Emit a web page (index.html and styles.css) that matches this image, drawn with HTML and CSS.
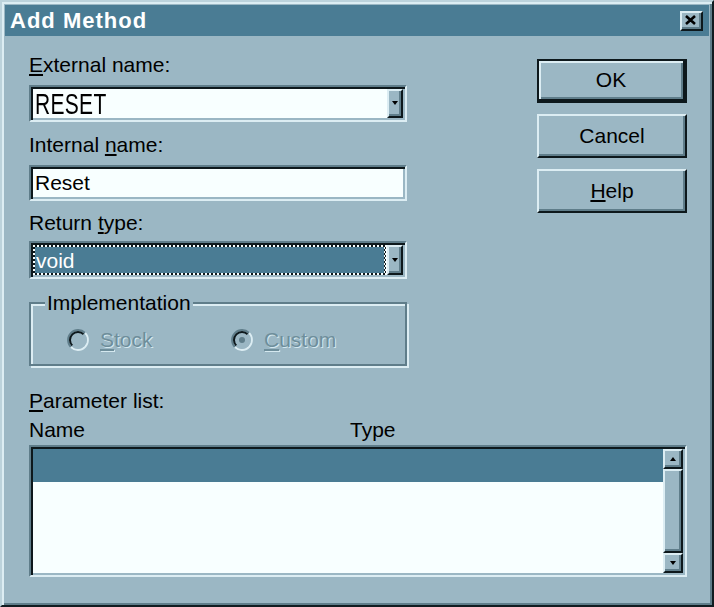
FILE: index.html
```html
<!DOCTYPE html>
<html>
<head>
<meta charset="utf-8">
<link rel="stylesheet" href="styles.css">
</head>
<body>
<div class="window">
  <div class="titlebar">
    <span class="title">Add Method</span>
    <span class="close"><svg width="11" height="10" viewBox="0 0 11 10"><path d="M1 1 L10 9 M10 1 L1 9" stroke="#000" stroke-width="2.6" fill="none"/></svg></span>
  </div>
  <div class="body">
    <div class="main">
      <div class="leftcol">
        <div class="label"><u>E</u>xternal name:</div>
        <div class="field combo">
          <div class="text"><span class="caps">RESET</span></div>
          <div class="dropbtn"><svg width="6" height="4" viewBox="0 0 6 4"><polygon points="0,0 6,0 3,4" fill="#000"/></svg></div>
        </div>
        <div class="label l2">Internal <u>n</u>ame:</div>
        <div class="field edit"><div class="text">Reset</div></div>
        <div class="label l3">Return <u>t</u>ype:</div>
        <div class="field combo sel">
          <div class="focus"><div class="fill">void</div></div>
          <div class="dropbtn"><svg width="6" height="4" viewBox="0 0 6 4"><polygon points="0,0 6,0 3,4" fill="#000"/></svg></div>
        </div>
        <fieldset class="group">
          <legend>Implementation</legend>
          <div class="radios">
            <div class="radio first">
              <svg width="22" height="22" viewBox="0 0 22 22">
                <circle cx="11" cy="11" r="8" fill="#9bb7c4"/>
                <path d="M3.93 18.07 A10 10 0 0 1 18.07 3.93" stroke="#5f7d8a" stroke-width="2" fill="none"/>
                <path d="M18.07 3.93 A10 10 0 0 1 3.93 18.07" stroke="#dcedf3" stroke-width="2" fill="none"/>
                <path d="M5.34 16.66 A8 8 0 0 1 16.66 5.34" stroke="#0d181c" stroke-width="2" fill="none"/>
                <path d="M16.66 5.34 A8 8 0 0 1 5.34 16.66" stroke="#9bb7c4" stroke-width="2" fill="none"/>
              </svg>
              <span class="dis"><u>S</u>tock</span>
            </div>
            <div class="radio">
              <svg width="22" height="22" viewBox="0 0 22 22">
                <circle cx="11" cy="11" r="8" fill="#9bb7c4"/>
                <path d="M3.93 18.07 A10 10 0 0 1 18.07 3.93" stroke="#5f7d8a" stroke-width="2" fill="none"/>
                <path d="M18.07 3.93 A10 10 0 0 1 3.93 18.07" stroke="#dcedf3" stroke-width="2" fill="none"/>
                <path d="M5.34 16.66 A8 8 0 0 1 16.66 5.34" stroke="#0d181c" stroke-width="2" fill="none"/>
                <path d="M16.66 5.34 A8 8 0 0 1 5.34 16.66" stroke="#9bb7c4" stroke-width="2" fill="none"/>
                <circle cx="11" cy="11" r="3" fill="#5f7d8a"/>
              </svg>
              <span class="dis"><u>C</u>ustom</span>
            </div>
          </div>
        </fieldset>
      </div>
      <div class="buttons">
        <div class="btn default">OK</div>
        <div class="btn">Cancel</div>
        <div class="btn"><u>H</u>elp</div>
      </div>
    </div>
    <div class="label plabel"><u>P</u>arameter list:</div>
    <div class="cols"><span>Name</span><span>Type</span></div>
    <div class="field listbox">
      <div class="rows"><div class="row selected"></div></div>
      <div class="vscroll">
        <div class="sbtn"><svg width="6" height="4" viewBox="0 0 6 4"><polygon points="0,4 6,4 3,0" fill="#000"/></svg></div>
        <div class="thumb"></div>
        <div class="sbtn"><svg width="6" height="4" viewBox="0 0 6 4"><polygon points="0,0 6,0 3,4" fill="#000"/></svg></div>
      </div>
    </div>
  </div>
</div>
</body>
</html>
```
FILE: styles.css
```css
body {
  margin: 0;
  background: #9bb7c4;
  font-family: "Liberation Sans", Arial, sans-serif;
  color: #000;
}

.window {
  width: 714px;
  height: 607px;
  box-sizing: border-box;
  border: 2px solid;
  border-color: #bcd3dc #101c21 #101c21 #bcd3dc;
  box-shadow: inset 2px 2px 0 #dcedf3, inset -2px -2px 0 #5f7d8a;
  padding: 3px;
  background: #9bb7c4;
  display: flex;
  flex-direction: column;
}

.titlebar {
  height: 31px;
  flex: none;
  background: #4a7c94;
  display: flex;
  align-items: center;
  justify-content: space-between;
  padding: 0 6px 0 5px;
}

.title {
  color: #fff;
  font-weight: bold;
  font-size: 22px;
  letter-spacing: 1px;
  line-height: 31px;
}

.close {
  width: 23px;
  height: 20px;
  box-sizing: border-box;
  border: 2px solid;
  border-color: #dcedf3 #0d181c #0d181c #dcedf3;
  box-shadow: inset -2px -2px 0 #5f7d8a;
  background: #9bb7c4;
  display: flex;
  align-items: center;
  justify-content: center;
  padding: 0 2px 2px 0;
}

.body {
  flex: 1;
  padding: 17px 22px 0 24px;
}

.main {
  display: flex;
  justify-content: space-between;
}

.leftcol {
  width: 378px;
}

.label {
  font-size: 21px;
  line-height: 24px;
  height: 24px;
  white-space: nowrap;
}

u {
  text-decoration-thickness: 2px;
  text-underline-offset: 2px;
}

.field {
  box-sizing: border-box;
  border: 2px solid;
  border-color: #5f7d8a #dcedf3 #dcedf3 #5f7d8a;
  box-shadow: inset 2px 2px 0 #0d181c, inset -2px -2px 0 #9bb7c4;
  padding: 2px;
  background: #f8ffff;
  display: flex;
}

.text {
  flex: 1;
  padding-left: 2px;
  font-size: 21px;
  line-height: 29px;
  white-space: nowrap;
}

.caps {
  display: inline-block;
  transform: scaleY(1.38);
  letter-spacing: 0.3px;
}

.combo {
  height: 37px;
  margin-top: 8px;
}

.edit {
  height: 36px;
  margin-top: 8px;
}

.edit .text {
  line-height: 28px;
}

.l2 {
  margin-top: 11px;
}

.l3 {
  margin-top: 10px;
}

.combo.sel {
  height: 38px;
  margin-top: 6px;
}

.dropbtn {
  width: 16px;
  box-sizing: border-box;
  border: 2px solid;
  border-color: #dcedf3 #0d181c #0d181c #dcedf3;
  box-shadow: inset -2px -2px 0 #5f7d8a;
  background: #9bb7c4;
  display: flex;
  align-items: center;
  justify-content: center;
  padding: 0 1px 1px 0;
}

.focus {
  flex: 1;
  margin-right: 1px;
  padding: 2px;
  background: repeating-conic-gradient(#0d181c 0 25%, #f8ffff 0 50%) 0 0 / 4px 4px;
  display: flex;
}

.fill {
  flex: 1;
  background: #4a7c94;
  color: #fff;
  font-size: 21px;
  line-height: 26px;
  padding: 1px 0 0 1px;
  box-sizing: border-box;
}

.group {
  margin: 12px 0 0;
  padding: 0 0 12px;
  border: 2px solid #5f7d8a;
  box-shadow: inset 2px 2px 0 #dcedf3, 2px 2px 0 #dcedf3;
  min-width: 0;
}

.group legend {
  margin-left: 14px;
  padding: 0 2px;
  font-size: 21px;
  line-height: 24px;
  background: #9bb7c4;
}

.radios {
  display: flex;
  align-items: center;
  margin-top: 13px;
  padding-left: 36px;
  height: 24px;
}

.radio {
  display: flex;
  align-items: center;
  gap: 11px;
}

.radio.first {
  width: 164px;
}

.dis {
  font-size: 21px;
  line-height: 24px;
  color: #6e8e9b;
  text-shadow: 1px 1px 0 #d4e8ef;
}

.buttons {
  width: 150px;
  margin-top: 6px;
  display: flex;
  flex-direction: column;
  gap: 11px;
}

.btn {
  box-sizing: border-box;
  height: 44px;
  border: 2px solid;
  border-color: #dcedf3 #0d181c #0d181c #dcedf3;
  box-shadow: inset -2px -2px 0 #5f7d8a;
  background: #9bb7c4;
  font-size: 21px;
  display: flex;
  align-items: center;
  justify-content: center;
}

.btn.default {
  border-width: 2px 4px 4px 2px;
  border-color: #0d181c;
  box-shadow: inset 2px 2px 0 #dcedf3, inset -2px -2px 0 #5f7d8a;
}

.plabel {
  margin-top: 23px;
}

.cols {
  margin-top: 5px;
  display: grid;
  grid-template-columns: 321px auto;
  font-size: 21px;
  line-height: 24px;
  height: 24px;
}

.listbox {
  margin-top: 3px;
  height: 132px;
}

.rows {
  flex: 1;
  background: #f8ffff;
}

.row.selected {
  height: 33px;
  background: #4a7c94;
}

.vscroll {
  width: 20px;
  display: flex;
  flex-direction: column;
  background: #9bb7c4;
}

.sbtn,
.thumb {
  box-sizing: border-box;
  border: 2px solid;
  border-color: #dcedf3 #0d181c #0d181c #dcedf3;
  box-shadow: inset -2px -2px 0 #5f7d8a;
  background: #9bb7c4;
}

.sbtn {
  height: 20px;
  display: flex;
  align-items: center;
  justify-content: center;
  padding: 0 1px 1px 0;
}

.thumb {
  flex: 1;
}
```
